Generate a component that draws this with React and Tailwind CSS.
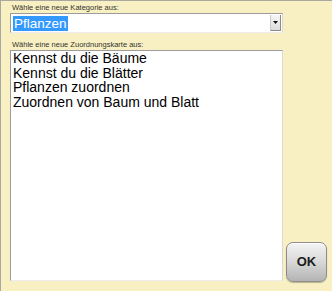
export default function App() {
  const cards = [
    "Kennst du die Bäume",
    "Kennst du die Blätter",
    "Pflanzen zuordnen",
    "Zuordnen von Baum und Blatt",
  ];

  return (
    <div className="w-[332px] h-[291px] bg-[#f8f0c2] border-t border-l border-[#a8a8a0] flex pl-[9px] pt-[2px] font-['Liberation_Sans',Arial,sans-serif] overflow-hidden">
      {/* left column */}
      <div className="w-[273px] flex flex-col">
        <div className="h-[10px] pl-[2px] text-[7.5px] leading-[10px] text-[#333]">
          Wähle eine neue Kategorie aus:
        </div>

        {/* category select */}
        <div className="h-[20px] flex bg-white border-t border-l border-[#9c9c9c] border-r border-r-[#d8d8d8] border-b border-b-[#ececec]">
          <div className="flex-1 flex items-center pl-[2px]">
            <span className="bg-[#3399ff] text-white text-[13.5px] leading-[15px] px-[1px]">
              Pflanzen
            </span>
          </div>
          <div className="w-[11px] my-[1px] mr-[1px] bg-gradient-to-b from-[#f6f6f6] to-[#dcdcdc] border-l border-[#c8c8c8] border-r border-r-[#8a8a8a] border-b border-b-[#8a8a8a] flex items-center justify-center">
            <svg width="5" height="3" viewBox="0 0 5 3">
              <path d="M0 0h5L2.5 3z" fill="#111" />
            </svg>
          </div>
        </div>

        <div className="mt-[7px] h-[10px] pl-[2px] text-[7.5px] leading-[10px] text-[#333]">
          Wähle eine neue Zuordnungskarte aus:
        </div>

        {/* card list */}
        <div className="h-[231px] bg-white border-t border-l border-[#9c9c9c] border-r border-r-[#d8d8d8] border-b border-b-[#ececec] pl-[2px]">
          {cards.map((c) => (
            <div key={c} className="text-[14px] leading-[14.6px] text-black">
              {c}
            </div>
          ))}
        </div>
      </div>

      {/* OK button */}
      <div className="flex-1 flex items-end pb-[9px] pl-[3px]">
        <button className="w-[41px] h-[40px] rounded-[7px] border border-[#8c8c8c] bg-gradient-to-b from-[#f4f4f4] via-[#d8d8d8] to-[#b4b4b4] shadow-[inset_0_1px_0_#ffffff,0_1px_1px_rgba(0,0,0,0.25)] flex items-center justify-center text-[13px] font-bold text-[#1a1a1a]">
          OK
        </button>
      </div>
    </div>
  );
}
